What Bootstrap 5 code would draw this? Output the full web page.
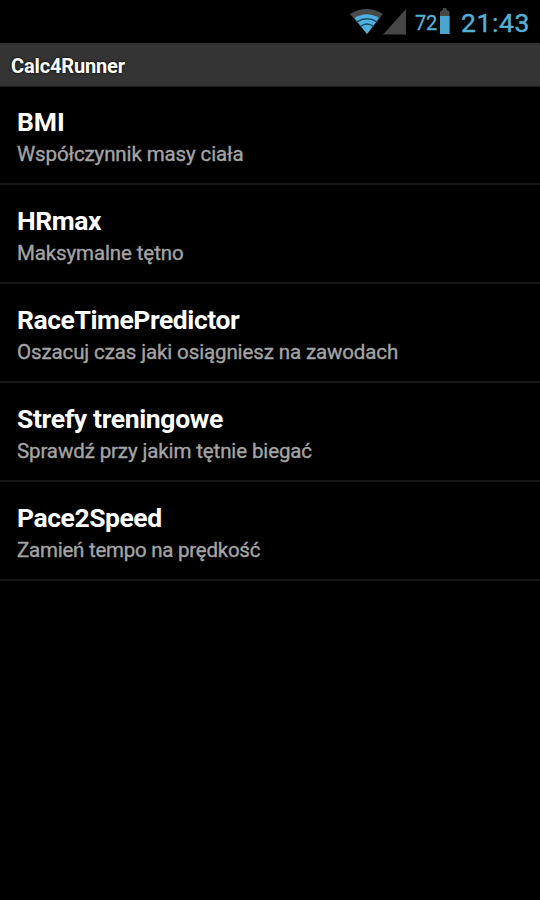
<!DOCTYPE html>
<html lang="pl" data-bs-theme="dark">
<head>
<meta charset="utf-8">
<meta name="viewport" content="width=device-width, initial-scale=1">
<title>Calc4Runner</title>
<link href="https://cdn.jsdelivr.net/npm/bootstrap@5.3.0/dist/css/bootstrap.min.css" rel="stylesheet">
<style>
body { background: #000; font-family: Roboto, sans-serif; min-height: 900px; }
.status { height: 43px; color: #56b0d6; padding-right: 10px; }
.status svg { display: block; flex: none; }
.level { font-size: 20px; line-height: 43px; padding: 2px 0 0 8px; width: 33px; letter-spacing: -.3px; -webkit-text-stroke: .3px; }
.clock { font-size: 26.5px; line-height: 43px; padding-top: 1px; margin-left: 11px; width: 69px; letter-spacing: .6px; white-space: nowrap; -webkit-text-stroke: .4px; }
.titlebar { height: 44px; background: #343434; border-bottom: 1px solid #1c1c1c; padding: 2px 11px 0; color: #fff; font-size: 20px; line-height: 42px; font-weight: 700; letter-spacing: -.15px; text-shadow: 0 0 3px #000; }
.entry { height: 99px; padding: 19px 17px 0; background: #000; border-bottom: 2px solid #171717; }
.entry:first-child { height: 98px; padding-top: 18px; }
.entry-name { font-size: 26.5px; line-height: 34px; font-weight: 700; color: #fff; letter-spacing: -.45px; }
.entry:first-child .entry-name { letter-spacing: -.1px; }
.entry:nth-child(4) .entry-name { letter-spacing: -.35px; }
.entry-note { font-size: 20.5px; line-height: 28px; color: #a4a4a4; margin-top: 1px; letter-spacing: -.12px; -webkit-text-stroke: .35px; }
.entry:last-child .entry-note { letter-spacing: -.25px; }
</style>
<script src="https://cdn.jsdelivr.net/npm/bootstrap@5.3.0/dist/js/bootstrap.bundle.min.js" defer></script>
</head>
<body>
<header class="status d-flex justify-content-end">
  <svg width="57" height="43" viewBox="0 0 57 43" aria-hidden="true">
    <path d="M0 14Q16.500 4 33 14L17 34Z" fill="#494949"/>
    <path d="M4.500 18Q17 10.500 29 18L17 34Z" fill="#4fb0df"/>
    <path d="M6.500 22.200Q17 15.500 27.500 22.200M10.500 26.500Q17 21.500 23.500 26.500" fill="none" stroke="#164b66" stroke-width="1.500"/>
    <path d="M33 34.500L56 9V34.500Z" fill="#464646"/>
  </svg>
  <span class="level">72</span>
  <svg width="10" height="43" viewBox="0 0 10 43" aria-hidden="true">
    <path d="M0 34V12L3 9.500V8H6.500V9.500L9.500 12V34Z" fill="#484848"/>
    <path d="M0 16H9.500V34H0Z" fill="#4aa6d1"/>
  </svg>
  <span class="clock">21:43</span>
</header>
<h1 class="titlebar mb-0">Calc4Runner</h1>
<main class="d-flex flex-column">
  <div class="entry"><div class="entry-name">BMI</div><div class="entry-note">Współczynnik masy ciała</div></div>
  <div class="entry"><div class="entry-name">HRmax</div><div class="entry-note">Maksymalne tętno</div></div>
  <div class="entry"><div class="entry-name">RaceTimePredictor</div><div class="entry-note">Oszacuj czas jaki osiągniesz na zawodach</div></div>
  <div class="entry"><div class="entry-name">Strefy treningowe</div><div class="entry-note">Sprawdź przy jakim tętnie biegać</div></div>
  <div class="entry"><div class="entry-name">Pace2Speed</div><div class="entry-note">Zamień tempo na prędkość</div></div>
</main>
</body>
</html>
